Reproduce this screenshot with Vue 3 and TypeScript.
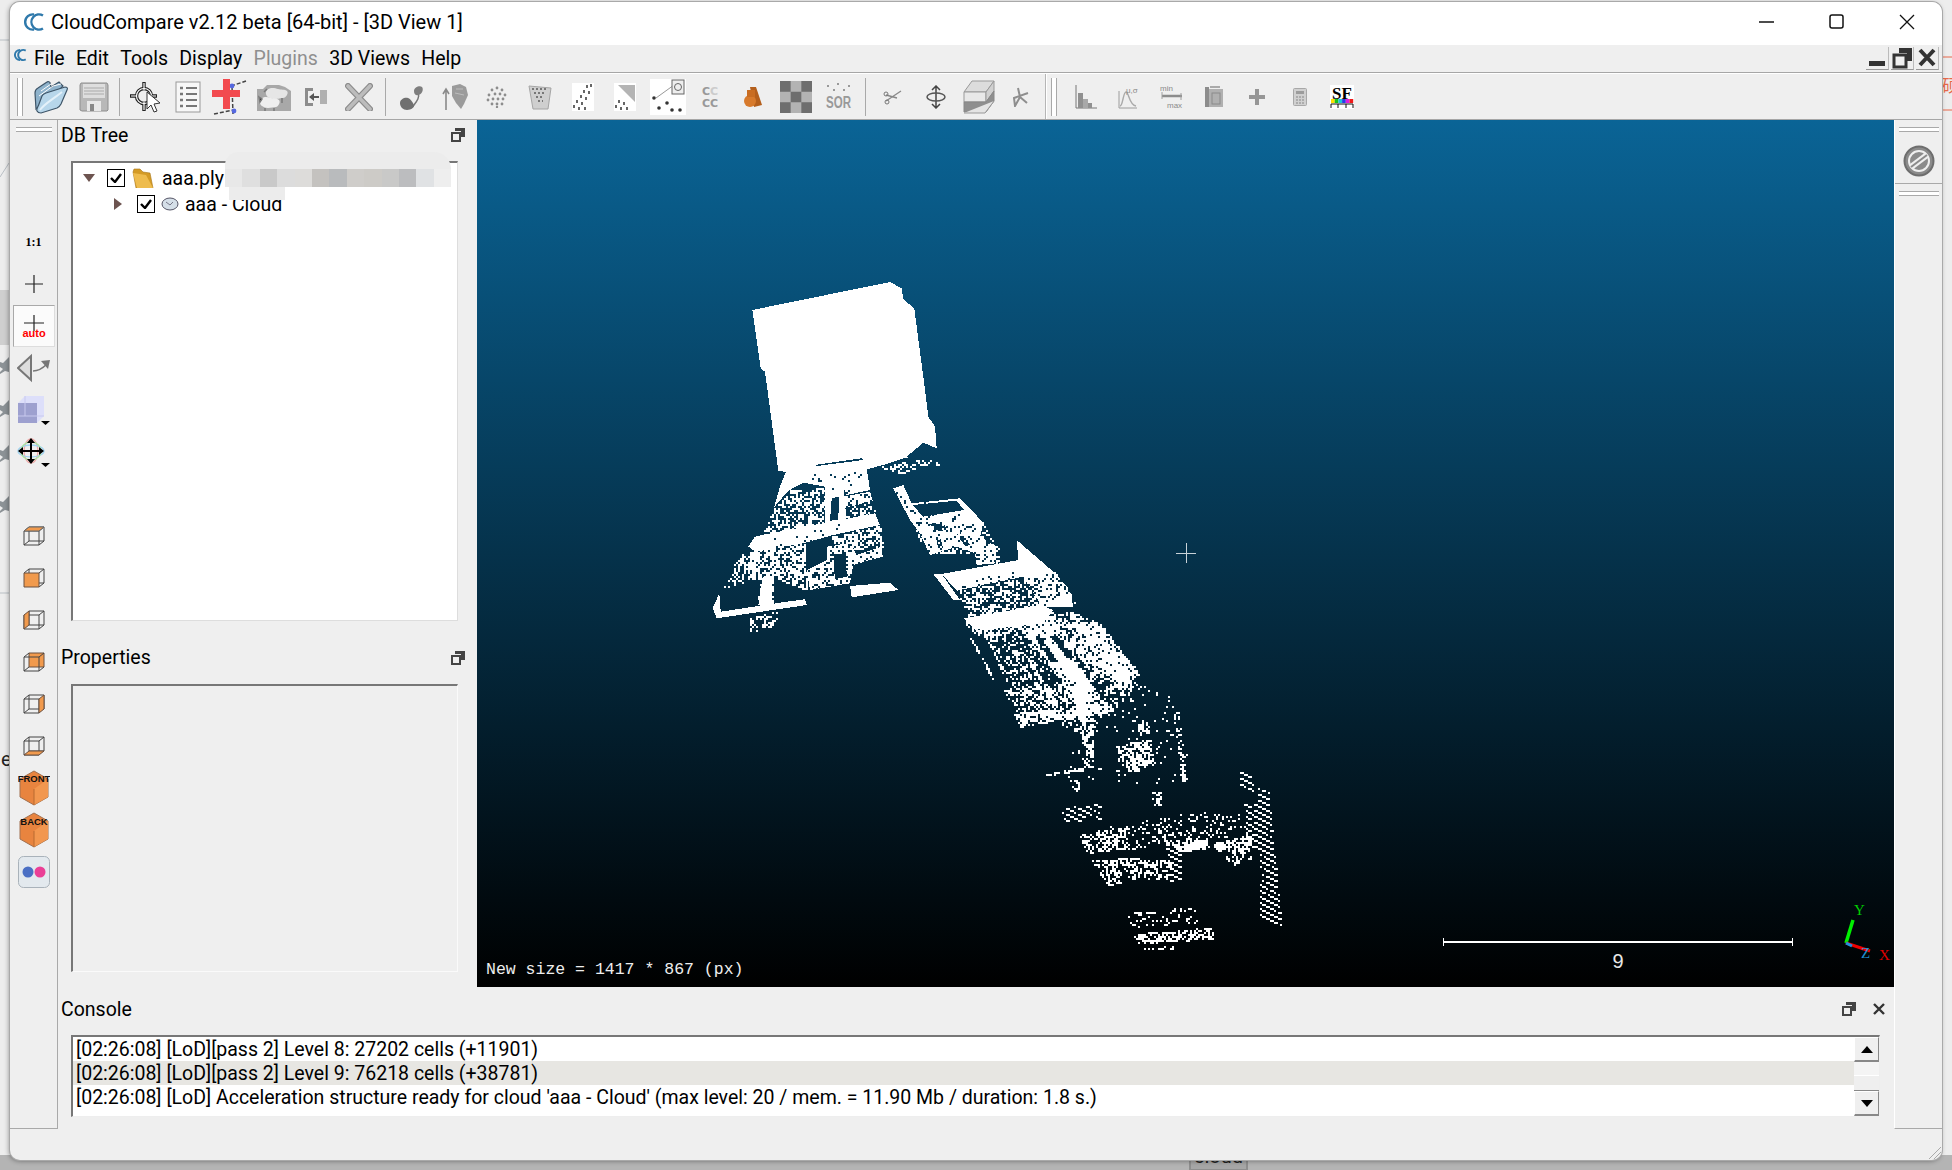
<script setup lang="ts">
// scene data is written in the coordinates of two crops of the view, then moved to page pixels
type Region = { p: number[]; d: number; stripe?: number }

const z8 = (p: number[]) => p.map((v, i) => (i % 2 ? 260 + v / 3 : 690 + v / 3))
const z9 = (p: number[]) => p.map((v, i) => (i % 2 ? 550 + v / 3 : 900 + v / 3))

const toPath = (p: number[]) => {
  let s = ''
  for (let i = 0; i < p.length; i += 2) s += (i ? 'L' : 'M') + p[i].toFixed(1) + ' ' + p[i + 1].toFixed(1)
  return s + 'Z'
}

const inside = (p: number[], x: number, y: number) => {
  let c = false
  for (let i = 0, j = p.length - 2; i < p.length; j = i, i += 2) {
    if (p[i + 1] > y !== p[j + 1] > y && x < ((p[j] - p[i]) * (y - p[i + 1])) / (p[j + 1] - p[i + 1]) + p[i]) c = !c
  }
  return c
}

let seed = 20714
const rnd = () => {
  seed = (seed + 0x6d2b79f5) | 0
  let t = Math.imul(seed ^ (seed >>> 15), 1 | seed)
  t = (t + Math.imul(t ^ (t >>> 7), 61 | t)) ^ t
  return ((t ^ (t >>> 14)) >>> 0) / 4294967296
}

const scatter = (list: Region[]) => {
  let s = ''
  for (const r of list) {
    const xs = r.p.filter((_, i) => i % 2 === 0)
    const ys = r.p.filter((_, i) => i % 2 === 1)
    const x0 = Math.floor(Math.min(...xs) / 2) * 2
    const y0 = Math.floor(Math.min(...ys) / 2) * 2
    for (let x = x0; x < Math.max(...xs); x += 2) {
      for (let y = y0; y < Math.max(...ys); y += 2) {
        if (!inside(r.p, x, y)) continue
        if (r.stripe) {
          const m = (y - x * 0.52) % r.stripe
          if ((m + r.stripe) % r.stripe >= 2) continue
        }
        if (rnd() < r.d) s += `M${x} ${y}h2v2h-2z`
      }
    }
  }
  return s
}

const solids = [
  z8([187,150,600,66,635,85,640,118,673,145,680,200,700,350,715,470,735,500,740,565,700,548,722,592,640,595,580,615,530,628,290,636,265,632,225,335,212,325]),
  z8([290,630,530,625,540,690,470,705,455,672,405,680,340,668,295,692,252,742,270,680]),
  z8([405,680,460,670,470,790,405,800]),
  z8([215,825,555,760,570,795,430,825,340,850,200,875,175,860,195,830]),
  z8([460,710,540,695,548,722,465,745]),
  z8([478,780,555,765,555,775,480,790]),
  z8([410,860,480,850,500,885,575,860,578,890,490,915,480,970,360,990,350,930,410,900]),
  z8([480,978,600,968,625,990,485,1012]),
  z8([92,1055,290,1025,345,1018,350,1035,80,1075,68,1045,88,1000]),
  z8([218,950,245,950,245,1030,205,1035]),
  z8([610,685,640,675,665,730,810,715,850,755,880,790,870,830,920,860,915,910,860,915,855,880,800,860,720,885,690,820,660,780]),
  z8([755,942,985,900,980,840,1090,935,1140,990,1150,1040,1050,1040,1000,950,800,992]),
  z8([830,1075,1050,1035,1090,1050,1060,1090,880,1110]),
  z8([730,942,755,942,810,1020,790,1020]),
  z9([190,205,420,170,430,200,225,240]),
]

const holes = [
  z8([375,615,515,595,520,600,380,618]),
  z8([425,715,447,710,445,780,420,782]),
  z8([432,885,468,880,470,950,434,958]),
  z8([930,985,1005,960,1050,1030,945,1050]),
  z8([668,735,800,722,822,750,700,770]),
  z8([720,790,760,785,770,810,730,815]),
  z8([738,830,750,830,760,868,745,870]),
  z8([795,815,810,815,840,855,825,858]),
  z8([250,960,345,945,345,990,245,1000]),
  z8([100,985,200,968,205,1032,95,1050]),
  z8([650,590,700,548,722,592,690,610]),
]

const points = scatter([
  { p: z8([250,745,300,690,405,680,400,795,215,825]), d: 0.5 },
  { p: z8([465,745,548,722,555,765,470,785]), d: 0.4 },
  { p: z8([560,620,720,590,760,640,740,600,640,640]), d: 0.4 },
  { p: z8([425,825,570,795,578,860,430,870]), d: 0.62 },
  { p: z8([175,860,345,850,350,990,245,950,180,960]), d: 0.66 },
  { p: z8([210,950,250,945,250,1030,200,1040]), d: 0.6 },
  { p: z8([150,880,210,870,180,960,90,985]), d: 0.5 },
  { p: z8([175,1070,270,1050,250,1100,180,1115]), d: 0.55 },
  { p: z8([670,770,880,780,920,870,860,880,720,880,680,830]), d: 0.4 },
  { p: z8([880,830,925,860,925,910,880,910]), d: 0.4 },
  { p: z8([800,990,1000,950,1050,1040,880,1070,830,1070]), d: 0.5 },
  { p: z8([1000,900,1090,930,1160,1030,1060,1000]), d: 0.4 },
  { p: z9([190,210,420,170,470,190,510,180,600,220,690,340,680,380,600,380,540,380,450,340,350,230,270,270,210,240]), d: 0.55 },
  { p: z9([350,230,450,200,700,350,700,420,560,560,480,520,330,430,260,270]), d: 0.28 },
  { p: z9([370,230,440,220,600,440,530,470]), d: 0.78 },
  { p: z9([500,200,610,230,720,370,650,420]), d: 0.6 },
  { p: z9([590,250,700,345,680,415,600,360]), d: 0.55 },
  { p: z9([590,360,720,400,800,440,720,430,600,400]), d: 0.25 },
  { p: z9([340,320,348,316,428,420,418,425]), d: 0.7 },
  { p: z9([380,330,388,326,448,420,438,425]), d: 0.7 },
  { p: z9([205,260,212,258,280,382,274,386]), d: 0.85 },
  { p: z9([340,490,620,450,630,485,360,530]), d: 0.72 },
  { p: z9([310,420,470,400,540,450,350,490]), d: 0.42 },
  { p: z9([528,380,572,380,582,650,552,650]), d: 0.62 },
  { p: z9([500,450,800,410,890,700,500,700]), d: 0.04 },
  { p: z9([640,585,750,565,762,640,690,672]), d: 0.62 },
  { p: z9([815,455,830,455,862,700,842,700]), d: 0.38 },
  { p: z9([432,670,550,648,552,660,435,676]), d: 0.7 },
  { p: z9([530,845,910,780,1020,790,1040,850,670,900]), d: 0.2 },
  { p: z9([800,880,920,865,925,893,840,905]), d: 0.88 },
  { p: z9([930,880,1060,850,1050,882,950,898]), d: 0.72 },
  { p: z9([1012,655,1055,680,1060,735,1018,715]), d: 0.92, stripe: 6 },
  { p: z9([1070,700,1105,715,1145,1130,1080,1095]), d: 0.92, stripe: 6 },
  { p: z9([1030,750,1070,760,1085,920,1040,880]), d: 0.92, stripe: 6 },
  { p: z9([795,885,840,885,845,1000,810,990]), d: 0.92, stripe: 6 },
  { p: z9([535,850,680,830,680,895,560,910]), d: 0.42 },
  { p: z9([570,925,650,925,675,995,620,1005]), d: 0.5 },
  { p: z9([650,920,820,930,800,985,690,990]), d: 0.45 },
  { p: z9([665,1090,890,1065,890,1120,700,1130]), d: 0.16 },
  { p: z9([695,1150,930,1130,945,1165,710,1180]), d: 0.55 },
  { p: z9([730,1190,830,1180,830,1200,735,1200]), d: 0.3 },
  { p: z9([480,770,600,760,605,805,495,815]), d: 0.8, stripe: 6 },
  { p: z9([750,725,785,725,785,770,760,770]), d: 0.5 },
  { p: z9([940,890,1060,880,1060,920,1000,945]), d: 0.42 },
  { p: z9([500,685,540,690,540,735,505,705]), d: 0.45 },
  { p: z9([710,505,745,510,745,550,712,545]), d: 0.5 },
])

const specks = scatter([
  { p: z8([410,860,480,850,500,885,575,860,578,890,490,915,480,970,360,990,350,930,410,900]), d: 0.22 },
  { p: z8([215,825,555,760,570,795,430,825,340,850,200,875]), d: 0.04 },
  { p: z8([460,710,540,695,548,722,465,745]), d: 0.22 },
  { p: z8([610,685,880,790,920,910,720,885]), d: 0.12 },
  { p: z8([300,640,530,630,470,700,340,668]), d: 0.06 },
  { p: z8([800,992,1000,950,1000,925,800,965]), d: 0.1 },
  { p: z8([1000,950,1090,935,1140,990,1050,1040]), d: 0.25 },
  { p: z9([420,260,470,330,450,335,405,265]), d: 0.9 },
  { p: z9([465,250,520,320,505,330,450,258]), d: 0.9 },
  { p: z9([520,300,570,370,558,376,506,306]), d: 0.8 },
])

const solidPath = solids.map(toPath).join('')
const holePath = holes.map(toPath).join('')

const mosaic = ['#e8e8e8', '#dfdfdf', '#c9c9c9', '#dcdcdc', '#dddcda', '#c4c2bf', '#b9bbbd', '#cfcdca', '#cdcbc7', '#c9c9c8', '#bcbdbf', '#e0e2e4', '#eeeeee']
const consoleRows = [
  "[02:26:08] [LoD][pass 2] Level 8: 27202 cells (+11901)",
  "[02:26:08] [LoD][pass 2] Level 9: 76218 cells (+38781)",
  "[02:26:08] [LoD] Acceleration structure ready for cloud 'aaa - Cloud' (max level: 20 / mem. = 11.90 Mb / duration: 1.8 s.)",
]
</script>

<template>
  <div class="page">
    <svg class="behind" width="1952" height="1170">
      <rect x="0" y="1155" width="1952" height="15" fill="#b4b4b4" />
      <rect x="1190" y="1155" width="57" height="15" fill="#a6a6a6" stroke="#8e8e8e" stroke-width="2" />
      <text x="1194" y="1163" class="stray-dark">cloud</text>
      <rect x="0" y="290" width="10" height="55" fill="#cfcfcf" />
      <g fill="#8c9296">
        <path d="M9 357l-6 6-3-1v5l3 2-3 3v2l5-3 4 1z" />
        <path d="M9 400l-6 6-3-1v5l3 2-3 3v2l5-3 4 1z" />
        <path d="M9 445l-6 6-3-1v5l3 2-3 3v2l5-3 4 1z" />
        <path d="M9 496l-6 6-3-1v5l3 2-3 3v2l5-3 4 1z" />
      </g>
      <path d="M0 40h10M0 177l9-14M0 593h10" stroke="#b9bfc4" fill="none" />
      <path d="M1942 57h10M1942 110h10" stroke="#e8694a" />
      <text x="1942" y="92" class="stray">硕</text>
      <text x="1" y="766" class="stray-dark">e</text>
    </svg>

    <div class="window">
      <header class="titlebar">
        <svg class="cc-logo" width="22" height="22" viewBox="0 0 22 22">
          <g fill="none" stroke="#2f79ab" stroke-width="2.4">
            <path d="M11 3.5a7.6 7.6 0 1 0 0 15" />
            <path d="M20 4.5a7.6 7.6 0 1 0 0 13" />
          </g>
        </svg>
        <span class="title">CloudCompare v2.12 beta [64-bit] - [3D View 1]</span>
        <div class="caption">
          <svg width="16" height="16"><path d="M0 8h15" stroke="#111" stroke-width="1.4" /></svg>
          <svg width="16" height="16"><rect x="1" y="1" width="13" height="13" rx="2" fill="none" stroke="#111" stroke-width="1.5" /></svg>
          <svg width="16" height="16"><path d="M1 1l14 14M15 1L1 15" stroke="#111" stroke-width="1.3" /></svg>
        </div>
      </header>

      <nav class="menubar">
        <svg class="cc-small" width="14" height="14" viewBox="0 0 22 22">
          <g fill="none" stroke="#2f79ab" stroke-width="3">
            <path d="M11 3a8 8 0 1 0 0 16" />
            <path d="M20 4a8 8 0 1 0 0 14" />
          </g>
        </svg>
        <span>File</span><span>Edit</span><span>Tools</span><span>Display</span>
        <span class="off">Plugins</span><span>3D Views</span><span>Help</span>
        <div class="mdi">
          <button><svg width="20" height="20"><rect x="2" y="13" width="16" height="5" fill="#333" /></svg></button>
          <button>
            <svg width="22" height="22"><path d="M8 1h13v13h-5V6H8z" fill="#333" /><rect x="3" y="8" width="12" height="12" fill="none" stroke="#333" stroke-width="3" /></svg>
          </button>
          <button><svg width="20" height="20"><path d="M3 2l14 15M17 2L3 17" stroke="#333" stroke-width="4" /></svg></button>
        </div>
      </nav>

      <div class="toolbar">
        <i class="handle"></i>
        <b class="tool">
          <svg width="34" height="34" viewBox="0 0 34 34">
            <path d="M2 29L1 13c0-2 1-4 3-5l9-6c1-1 3 0 3 1l1 4 8-5 4 4-2 2z" fill="#8fb3cc" stroke="#3e5568" stroke-width="1.2" />
            <path d="M5 16L19 6l8-2M7 11l10-7" stroke="#fff" fill="none" />
            <path d="M3 31c-1-2 1-4 2-7l3-8c1-2 2-2 4-3l19-6c2 0 3 1 2 3l-6 14c-1 2-2 3-4 4L7 33c-2 0-3 0-4-2z" fill="#b7d6ea" stroke="#3e5568" stroke-width="1.2" />
            <path d="M6 30c4-6 12-10 22-18" stroke="#e4f1f9" stroke-width="2" fill="none" />
          </svg>
        </b>
        <b class="tool">
          <svg width="30" height="30" viewBox="0 0 30 30">
            <path d="M2 1h26l1 2v25l-1 1H3l-2-1V3z" fill="#b8b8b8" stroke="#8e8e8e" />
            <rect x="4" y="2" width="22" height="14" fill="#dedede" />
            <path d="M5 6h20M5 9h20M5 12h20" stroke="#aaa" />
            <rect x="8" y="19" width="14" height="10" fill="#e8e8e8" />
            <rect x="11" y="22" width="4" height="7" fill="#888" />
          </svg>
        </b>
        <i class="sep sep-a"></i>
        <b class="tool">
          <svg width="34" height="34" viewBox="0 0 34 34">
            <g fill="none">
              <g stroke="#222" stroke-width="3.400">
                <circle cx="15" cy="16" r="7.500" />
                <path d="M15 2v8M15 22v9M1 16h7M22 16h6" />
              </g>
              <g stroke="#fff" stroke-width="1.200">
                <circle cx="15" cy="16" r="7.500" />
                <path d="M15 3v7M15 22v8M2 16h6M22 16h5" />
              </g>
            </g>
            <path d="M18 12l0 17 4-4 3 7 3-1-3-7 6-1z" fill="#fff" stroke="#333" />
          </svg>
        </b>
        <b class="tool">
          <svg width="26" height="32" viewBox="0 0 26 32">
            <rect x="1" y="1" width="24" height="30" fill="#f7f7f7" stroke="#999" />
            <path d="M5 7h3M5 13h3M5 19h3M5 25h3" stroke="#777" stroke-width="2.400" />
            <path d="M11 7h11M11 13h11M11 19h11M11 25h11" stroke="#777" stroke-width="2" />
          </svg>
        </b>
        <b class="tool">
          <svg width="38" height="36" viewBox="0 0 38 36">
            <path d="M19 7L34 2M20 7l1 28M2 35L21 31" fill="none" stroke="#444" stroke-width="1.500" stroke-dasharray="4 2" />
            <circle cx="20" cy="7" r="2.400" fill="#5568e0" />
            <circle cx="22" cy="32" r="2.400" fill="#5568e0" />
            <path d="M11 0h7v11h10v7H18v12h-7V18H0v-7h11z" fill="#f24a4f" />
          </svg>
        </b>
        <b class="tool">
          <svg width="34" height="28" viewBox="0 0 34 28">
            <path d="M0 6h6l4-4 12 0 6 2 6 4v20H0z" fill="#a8a8a8" />
            <path d="M10 7c3-3 8-2 11-1s7 0 9 2-1 7-4 7-4 1-8 1-5-1-7-2-3-5-1-7z" fill="#e6e6e6" />
            <path d="M4 16c3-3 7-2 10-1s6 0 8 2-1 7-3 7-5 1-8 1-4-1-6-2-3-5-1-7z" fill="#eeeeee" />
            <path d="M2 14l3 2-2 3zM8 25v3M17 25v3M25 15v5M10 6L7 9" stroke="#7a7a7a" stroke-width="1.500" />
          </svg>
        </b>
        <b class="tool">
          <svg width="24" height="24" viewBox="0 0 24 24">
            <path d="M1 3h8v3H4v12h5v3H1z" fill="#8c8c8c" />
            <path d="M16 5h7v14h-7z" fill="#b0b0b0" />
            <path d="M6 12h9" stroke="#555" stroke-width="2.200" />
            <path d="M5 12l5-4v8z" fill="#555" />
          </svg>
        </b>
        <b class="tool">
          <svg width="28" height="28" viewBox="0 0 28 28">
            <path d="M3 3l22 23M25 3L3 26" stroke="#8c8c8c" stroke-width="6" stroke-linecap="round" />
            <path d="M3 3l22 23M25 3L3 26" stroke="#bcbcbc" stroke-width="3.600" stroke-linecap="round" />
          </svg>
        </b>
        <i class="sep sep-b"></i>
        <b class="tool">
          <svg width="26" height="28" viewBox="0 0 26 28">
            <path d="M19 10c2 4-1 8-4 12l-3 3" fill="none" stroke="#777" stroke-width="1.500" />
            <path d="M15 8c0-4 6-6 8-4s0 8-4 8c-3 1-4-2-4-4z" fill="#7e7e7e" />
            <path d="M1 20c0-4 5-6 8-5s5 5 6 7-3 5-7 5-7-3-7-7z" fill="#707070" />
          </svg>
        </b>
        <b class="tool">
          <svg width="26" height="28" viewBox="0 0 26 28">
            <path d="M4 27V7M1 11l3-5 3 5" stroke="#8a8a8a" fill="none" stroke-width="1.600" />
            <path d="M10 3l8-2 6 3 2 8-4 9-3 5-5-6-4-7z" fill="#9b9b9b" />
            <path d="M14 6l7 0M13 10l9 2" stroke="#bdbdbd" />
          </svg>
        </b>
        <b class="tool"><svg width="22" height="22" viewBox="0 0 22 22" fill="#8d8d8d"><circle cx="11" cy="2" r="1.400" /><circle cx="6" cy="4" r="1.400" /><circle cx="16" cy="4" r="1.400" /><circle cx="3" cy="9" r="1.400" /><circle cx="9" cy="8" r="1.400" /><circle cx="14" cy="8" r="1.400" /><circle cx="19" cy="9" r="1.400" /><circle cx="2" cy="14" r="1.400" /><circle cx="7" cy="13" r="1.400" /><circle cx="12" cy="13" r="1.400" /><circle cx="17" cy="13" r="1.400" /><circle cx="6" cy="18" r="1.400" /><circle cx="11" cy="18" r="1.400" /><circle cx="16" cy="18" r="1.400" /><circle cx="11" cy="21" r="1.200" /></svg></b>
        <b class="tool">
          <svg width="26" height="26" viewBox="0 0 26 26">
            <path d="M2 2l22 2-3 21-15 0z" fill="#cfcfcf" stroke="#a5a5a5" />
            <path d="M5 5h16M7 9h12M9 13h8M11 17h5" stroke="#777" stroke-width="2" stroke-dasharray="2 2" />
          </svg>
        </b>
        <b class="tool">
          <svg width="22" height="28" viewBox="0 0 22 28">
            <rect width="22" height="28" fill="#fff" />
            <g fill="#666"><rect x="14" y="2" width="2" height="3" /><rect x="18" y="1" width="2" height="3" /><rect x="11" y="7" width="2" height="3" /><rect x="16" y="8" width="2" height="3" /><rect x="8" y="12" width="2" height="3" /><rect x="13" y="14" width="2" height="3" /><rect x="4" y="17" width="2" height="3" /><rect x="9" y="19" width="2" height="3" /><rect x="1" y="22" width="2" height="3" /><rect x="6" y="24" width="2" height="3" /><rect x="12" y="24" width="2" height="3" /></g>
          </svg>
        </b>
        <b class="tool">
          <svg width="22" height="28" viewBox="0 0 22 28">
            <rect width="22" height="28" fill="#fff" />
            <path d="M4 2h17v17z" fill="#b4b4b4" />
            <g fill="#666"><rect x="1" y="22" width="2" height="3" /><rect x="6" y="24" width="2" height="3" /><rect x="12" y="24" width="2" height="3" /><rect x="4" y="17" width="2" height="3" /><rect x="9" y="19" width="2" height="3" /></g>
          </svg>
        </b>
        <b class="tool">
          <svg width="36" height="36" viewBox="0 0 36 36">
            <rect width="36" height="36" fill="#fff" />
            <path d="M6 19L24 6" stroke="#999" />
            <rect x="22" y="1" width="12" height="14" fill="#eee" stroke="#666" />
            <circle cx="28" cy="8" r="3.500" fill="none" stroke="#666" />
            <g fill="#333"><circle cx="4" cy="19" r="1.800" /><circle cx="9" cy="29" r="1.800" /><circle cx="17" cy="24" r="1.800" /><circle cx="22" cy="31" r="1.800" /><circle cx="30" cy="31" r="1.800" /></g>
          </svg>
        </b>
        <b class="tool"><svg width="20" height="26" viewBox="0 0 20 26"><text x="1" y="11" class="cc-txt" fill="#999">C<tspan fill="#ccc">C</tspan></text><text x="1" y="23" class="cc-txt" fill="#999">CC</text></svg></b>
        <b class="tool">
          <svg width="18" height="24" viewBox="0 0 18 24">
            <path d="M6 2h6l6 18-8 2z" fill="#b45f1c" />
            <circle cx="6" cy="16" r="6" fill="#d77a2c" />
            <rect x="3" y="5" width="8" height="7" fill="#c96d22" />
          </svg>
        </b>
        <b class="tool">
          <svg width="32" height="32" viewBox="0 0 3 3">
            <rect width="3" height="3" fill="#b3b3b3" />
            <path d="M0 0h1v1H0zM2 0h1v1H2zM1 1h1v1H1zM0 2h1v1H0zM2 2h1v1H2z" fill="#6e6e6e" />
          </svg>
        </b>
        <b class="tool">
          <svg width="26" height="34" viewBox="0 0 26 34">
            <g fill="#999"><rect x="1" y="5" width="2" height="2" /><rect x="7" y="9" width="2" height="2" /><rect x="11" y="3" width="2" height="2" /><rect x="17" y="9" width="2" height="2" /><rect x="22" y="5" width="2" height="2" /></g>
            <text x="0" y="28" class="sor" textLength="25" lengthAdjust="spacingAndGlyphs">SOR</text>
          </svg>
        </b>
        <i class="sep sep-c"></i>
        <b class="tool">
          <svg width="20" height="16" viewBox="0 0 20 16">
            <path d="M3 12L18 2M3 6l11 3" stroke="#888" fill="none" stroke-width="1.300" />
            <circle cx="3" cy="5" r="2" fill="none" stroke="#777" />
            <circle cx="4" cy="13" r="2" fill="none" stroke="#777" />
          </svg>
        </b>
        <b class="tool">
          <svg width="20" height="24" viewBox="0 0 20 24">
            <path d="M10 1v22M6 5l4-4 4 4M6 19l4 4 4-4" stroke="#444" fill="none" stroke-width="1.500" />
            <ellipse cx="10" cy="12" rx="9" ry="4" fill="none" stroke="#555" stroke-width="1.500" />
          </svg>
        </b>
        <b class="tool">
          <svg width="32" height="34" viewBox="0 0 32 34">
            <path d="M9 1h22l-8 11H1z" fill="#dcdcdc" stroke="#999" />
            <path d="M1 12h22v10H1z" fill="#e8e8e8" stroke="#999" />
            <path d="M23 12l8-11v10l-8 11z" fill="#d0d0d0" stroke="#999" />
            <path d="M1 22h22l8-11v10l-8 11H1z" fill="#8f8f8f" stroke="#888" />
            <path d="M1 33h21l9-12" fill="#e4e4e4" stroke="#999" />
          </svg>
        </b>
        <b class="tool">
          <svg width="16" height="20" viewBox="0 0 16 20">
            <path d="M5 1l2 9 7 6M15 6L1 11l1 8 5-9" fill="none" stroke="#8e8e8e" stroke-width="2" />
          </svg>
        </b>
        <i class="break"></i>
        <i class="handle handle-2"></i>
        <b class="tool">
          <svg width="22" height="24" viewBox="0 0 22 24">
            <path d="M1 0v23h21" fill="none" stroke="#777" />
            <rect x="3" y="8" width="5" height="15" fill="#909090" />
            <rect x="8" y="14" width="5" height="9" fill="#a8a8a8" />
            <rect x="13" y="18" width="4" height="5" fill="#909090" />
          </svg>
        </b>
        <b class="tool">
          <svg width="22" height="24" viewBox="0 0 22 24">
            <path d="M1 6v17h18" fill="none" stroke="#9c9c9c" />
            <path d="M2 21c3 0 3-14 6-14s3 13 10 14" fill="none" stroke="#aaa" stroke-width="1.400" />
            <text x="8" y="8" class="tiny">μ,σ</text>
          </svg>
        </b>
        <b class="tool">
          <svg width="24" height="28" viewBox="0 0 24 28">
            <text x="0" y="8" class="tiny">min</text>
            <text x="7" y="25" class="tiny">max</text>
            <path d="M2 13h20" stroke="#8c8c8c" stroke-width="2.400" />
            <path d="M2 9v7M21 10v7" stroke="#a0a0a0" />
          </svg>
        </b>
        <b class="tool">
          <svg width="20" height="22" viewBox="0 0 20 22">
            <rect x="1" y="1" width="4" height="20" fill="#8c8c8c" />
            <rect x="5" y="3" width="14" height="18" fill="#b0b0b0" />
            <rect x="8" y="7" width="8" height="11" fill="none" stroke="#8a8a8a" />
            <path d="M6 1h10" stroke="#aaa" stroke-width="2" />
          </svg>
        </b>
        <b class="tool"><svg width="16" height="16" viewBox="0 0 16 16"><path d="M6 0h4v6h6v4h-6v6H6v-6H0V6h6z" fill="#969696" /></svg></b>
        <b class="tool">
          <svg width="14" height="18" viewBox="0 0 14 18">
            <rect x="0.500" y="0.500" width="13" height="17" rx="1" fill="#d0d0d0" stroke="#a8a8a8" />
            <rect x="3" y="3" width="8" height="3" fill="#9c9c9c" />
            <path d="M3 9h2M6 9h2M9 9h2M3 12h2M6 12h2M9 12h2M3 15h2M6 15h2M9 15h2" stroke="#888" />
          </svg>
        </b>
        <b class="tool">
          <svg width="24" height="24" viewBox="0 0 24 24">
            <rect width="24" height="24" fill="#fff" />
            <text x="12" y="14" class="sf">SF</text>
            <rect x="1" y="14" width="3.700" height="4" fill="#ffe000" />
            <rect x="4.700" y="14" width="3.700" height="4" fill="#19c219" />
            <rect x="8.400" y="14" width="3.700" height="4" fill="#1bc6d8" />
            <rect x="12.100" y="14" width="3.700" height="4" fill="#2a3ce8" />
            <rect x="15.800" y="14" width="3.700" height="4" fill="#e01ee0" />
            <rect x="19.500" y="14" width="3.700" height="4" fill="#ee1b1b" />
            <path d="M1 23v-4h22v4M8 19v4M16 19v4" fill="none" stroke="#111" />
          </svg>
        </b>
      </div>

      <div class="body">
        <aside class="side">
          <i class="grip"></i>
          <div class="side-item one">1:1</div>
          <div class="side-item"><svg width="20" height="20"><path d="M10 1v18M1 10h18" stroke="#222" stroke-width="1.200" /></svg></div>
          <div class="side-item auto">
            <svg width="24" height="28" viewBox="0 0 24 28"><path d="M12 3v16M2 11h20" stroke="#222" stroke-width="1.200" /><text x="12" y="25" class="auto-txt">auto</text></svg>
          </div>
          <div class="side-item">
            <svg width="34" height="30" viewBox="0 0 34 30">
              <path d="M1 15L14 3v24z" fill="#ddd" stroke="#777" stroke-width="2" />
              <path d="M16 18c6 0 10-3 14-7" fill="none" stroke="#777" stroke-width="1.500" />
              <path d="M24 8l9-1-2 9z" fill="#777" />
            </svg>
          </div>
          <div class="side-item">
            <svg width="34" height="30" viewBox="0 0 34 30">
              <path d="M1 8l7-7h19v20l-7 7H1z" fill="#dddffa" />
              <path d="M1 8h19v20H1z" fill="#9da0cf" />
              <path d="M8 1v20H1M8 21l19 0" stroke="#c8c9ee" fill="none" />
              <path d="M24 26h9l-4.500 4z" fill="#000" />
            </svg>
          </div>
          <div class="side-item">
            <svg width="34" height="30" viewBox="0 0 34 30">
              <g fill="none" stroke-width="1.300">
                <ellipse cx="14" cy="14" rx="7" ry="12" stroke="#efaaa8" />
                <ellipse cx="14" cy="14" rx="13" ry="6" stroke="#9fd3f0" />
                <ellipse cx="14" cy="14" rx="10" ry="9" stroke="#a5e6a2" />
              </g>
              <path d="M14 2v24M2 14h24" stroke="#000" stroke-width="2" />
              <path d="M10 6l4-5 4 5zM10 22l4 5 4-5zM6 10l-5 4 5 4zM22 10l5 4-5 4z" fill="#000" />
              <path d="M24 26h9l-4.500 4z" fill="#000" />
            </svg>
          </div>
          <div class="side-item"></div>
          <div class="side-item">
            <svg width="22" height="20" viewBox="0 0 22 20"><g class="cube"><path d="M1 5h15v14H1zM6 1h15v14H6zM1 5l5-4M16 5l5-4M1 19l5-4M16 19l5-4" /></g><path d="M1 5l5-4h15l-5 4z" fill="#f19a4d" stroke="#6b6b6b" /></svg>
          </div>
          <div class="side-item">
            <svg width="22" height="20" viewBox="0 0 22 20"><g class="cube"><path d="M6 1h15v14H6zM1 5l5-4M16 5l5-4M16 19l5-4" /></g><path d="M1 5h15v14H1z" fill="#f19a4d" stroke="#6b5040" /></svg>
          </div>
          <div class="side-item">
            <svg width="22" height="20" viewBox="0 0 22 20"><g class="cube"><path d="M1 5h15v14H1zM6 1h15v14H6zM16 5l5-4M16 19l5-4" /></g><path d="M1 5l5-4v14l-5 4z" fill="#f19a4d" stroke="#6b5040" /></svg>
          </div>
          <div class="side-item">
            <svg width="22" height="20" viewBox="0 0 22 20"><path d="M6 1h15v14H6z" fill="#f19a4d" stroke="#6b5040" /><g class="cube"><path d="M1 5h15v14H1zM1 5l5-4M16 5l5-4M1 19l5-4M16 19l5-4" /></g></svg>
          </div>
          <div class="side-item">
            <svg width="22" height="20" viewBox="0 0 22 20"><g class="cube"><path d="M1 5h15v14H1zM6 1h15v14H6zM1 5l5-4M1 19l5-4" /></g><path d="M16 5l5-4v14l-5 4z" fill="#f19a4d" stroke="#6b5040" /></svg>
          </div>
          <div class="side-item">
            <svg width="22" height="20" viewBox="0 0 22 20"><g class="cube"><path d="M1 5h15v14H1zM6 1h15v14H6zM1 5l5-4M16 5l5-4" /></g><path d="M1 19l5-4h15l-5 4z" fill="#f19a4d" stroke="#6b5040" /></svg>
          </div>
          <div class="side-item">
            <svg width="32" height="36" viewBox="0 0 32 36">
              <path d="M16 1l14 8v18l-14 8-14-8V9z" fill="#e8843f" stroke="#a07050" />
              <path d="M16 19l14-10v18l-14 8z" fill="#f2974f" />
              <path d="M16 19v16" stroke="#b86a30" />
              <text x="16" y="12" class="cube-txt">FRONT</text>
            </svg>
          </div>
          <div class="side-item">
            <svg width="32" height="36" viewBox="0 0 32 36">
              <path d="M16 1l14 8v18l-14 8-14-8V9z" fill="#e8843f" stroke="#a07050" />
              <path d="M16 19l14-10v18l-14 8z" fill="#f2974f" />
              <path d="M16 19v16" stroke="#b86a30" />
              <text x="16" y="13" class="cube-txt">BACK</text>
            </svg>
          </div>
          <div class="side-item">
            <svg width="32" height="32" viewBox="0 0 32 32">
              <rect x="0.500" y="0.500" width="31" height="31" rx="5" fill="#e3e9ee" stroke="#a9b2ba" />
              <circle cx="10" cy="16" r="5.500" fill="#4a6fc4" />
              <circle cx="22" cy="16" r="5.500" fill="#ea3f96" />
            </svg>
          </div>
        </aside>

        <main class="center">
          <div class="upper">
            <div class="docks">
              <div class="dock-head tree-head">
                <span>DB Tree</span>
                <svg class="float" width="14" height="14"><path d="M4 0h10v9h-4V3H4z" fill="#444" /><rect x="1" y="5" width="8" height="8" fill="none" stroke="#444" stroke-width="2" /></svg>
              </div>
              <div class="tree">
                <div class="tree-row">
                  <i class="arrow-down"></i>
                  <i class="check"><svg width="12" height="10"><path d="M1 5l4 4 6-8" fill="none" stroke="#000" stroke-width="2.400" /></svg></i>
                  <svg class="folder" width="22" height="20" viewBox="0 0 22 20">
                    <path d="M1 4l1-3h6l3 3 7 1 3 15H4z" fill="#d49b26" stroke="#a8761a" stroke-width="0.600" />
                    <path d="M1 5l13 2 7 13H5z" fill="#eebc4e" />
                  </svg>
                  <span>aaa.ply</span>
                </div>
                <div class="tree-row nested">
                  <i class="arrow-right"></i>
                  <i class="check"><svg width="12" height="10"><path d="M1 5l4 4 6-8" fill="none" stroke="#000" stroke-width="2.400" /></svg></i>
                  <svg class="cloud" width="18" height="14" viewBox="0 0 18 14">
                    <ellipse cx="9" cy="7" rx="8" ry="6" fill="#d5dfe8" stroke="#556" />
                    <path d="M5 5l4 3 3-3" stroke="#778" fill="none" />
                  </svg>
                  <span>aaa - Cloud</span>
                </div>
                <div class="smudge">
                  <div class="smudge-top"></div>
                  <div class="smudge-cells">
                    <i v-for="(c, i) in mosaic" :key="i" :style="{ background: c }"></i>
                  </div>
                  <div class="smudge-tail"></div>
                </div>
              </div>
              <div class="dock-head props-head">
                <span>Properties</span>
                <svg class="float" width="14" height="14"><path d="M4 0h10v9h-4V3H4z" fill="#444" /><rect x="1" y="5" width="8" height="8" fill="none" stroke="#444" stroke-width="2" /></svg>
              </div>
              <div class="props"></div>
            </div>

            <section class="view">
              <svg width="1417" height="867" viewBox="477 120 1417 867">
                <defs>
                  <linearGradient id="sky" gradientUnits="userSpaceOnUse" x1="0" y1="120" x2="0" y2="987">
                    <stop offset="0" stop-color="#0a6496" />
                    <stop offset="1" stop-color="#000" />
                  </linearGradient>
                </defs>
                <g shape-rendering="crispEdges">
                  <path :d="solidPath" fill="#fff" />
                  <path :d="holePath" fill="url(#sky)" />
                  <path :d="points" fill="#fff" />
                  <path :d="specks" fill="url(#sky)" />
                </g>
                <path d="M1186 543v20M1176 553h20" stroke="#c8d2d8" shape-rendering="crispEdges" />
                <path d="M1443.500 938v8M1792.500 938v8" stroke="#fff" stroke-width="1" shape-rendering="crispEdges" />
                <path d="M1443 942h350" stroke="#fff" stroke-width="2" shape-rendering="crispEdges" />
                <text x="1618" y="968" class="scale-num">9</text>
                <text x="486" y="974" class="size-msg">New size = 1417 * 867 (px)</text>
                <path d="M1846 943l7-23" stroke="#00f000" stroke-width="3.500" />
                <path d="M1846 943l24 8" stroke="#f00000" stroke-width="3" />
                <path d="M1846 943l6 3" stroke="#1e90e0" stroke-width="3" />
                <text x="1854" y="915" class="axis" fill="#00d000">Y</text>
                <text x="1861" y="958" class="axis" fill="#1e8fd0">Z</text>
                <text x="1879" y="960" class="axis" fill="#e00000">X</text>
              </svg>
            </section>
          </div>

          <div class="console">
            <div class="console-head">
              <span>Console</span>
              <svg width="14" height="14"><path d="M4 0h10v9h-4V3H4z" fill="#444" /><rect x="1" y="5" width="8" height="8" fill="none" stroke="#444" stroke-width="2" /></svg>
              <svg width="12" height="12"><path d="M1 1l10 10M11 1L1 11" stroke="#333" stroke-width="2.400" /></svg>
            </div>
            <div class="log">
              <div class="log-rows">
                <div v-for="(row, i) in consoleRows" :key="i" class="log-row" :class="{ alt: i === 1 }">{{ row }}</div>
              </div>
              <div class="scroll">
                <button class="sb-btn"><i class="up"></i></button>
                <div class="sb-track"></div>
                <div class="sb-thumb"></div>
                <button class="sb-btn"><i class="down"></i></button>
              </div>
            </div>
          </div>
        </main>

        <aside class="side-right">
          <i class="grip"></i>
          <svg width="32" height="32" viewBox="0 0 32 32">
            <circle cx="16" cy="16" r="14.500" fill="#8b8b8b" stroke="#6e6e6e" stroke-width="2" />
            <circle cx="16" cy="16" r="10" fill="none" stroke="#efefef" stroke-width="2" />
            <path d="M8 22L24 10" stroke="#efefef" stroke-width="6" />
            <path d="M8 22L24 10" stroke="#8b8b8b" stroke-width="2" />
          </svg>
          <hr />
          <i class="grip"></i>
        </aside>
      </div>

      <footer class="status">
        <svg width="14" height="14"><path d="M13 1L1 13M13 6L6 13M13 10l-3 3" stroke="#aaa" /></svg>
      </footer>
    </div>
  </div>
</template>

<style scoped>
.page {
  position: relative;
  width: 1952px;
  height: 1170px;
  overflow: hidden;
  background: #ededed;
  font-family: Roboto, "Liberation Sans", sans-serif;
  font-size: 19.5px;
  color: #000;
}
.behind {
  position: absolute;
  left: 0;
  top: 0;
}
.stray {
  font: 17px "Noto Sans CJK SC", sans-serif;
  fill: #e8694a;
}
.stray-dark {
  font: 20px Roboto, sans-serif;
  fill: #222;
}
.window {
  position: relative;
  box-sizing: border-box;
  display: flex;
  flex-direction: column;
  width: 1932px;
  height: 1158px;
  margin: 2px 0 0 10px;
  background: #efefef;
  border-radius: 10px;
  box-shadow: 0 0 0 1px #a9a9a9, -1px 1px 5px rgba(0, 0, 0, 0.4);
  overflow: hidden;
}
.titlebar {
  display: flex;
  align-items: center;
  flex: 0 0 43px;
  box-sizing: border-box;
  padding: 0 0 3px 13px;
  background: #fff;
}
.cc-logo {
  margin-right: 6px;
}
.title {
  font-size: 20px;
}
.caption {
  display: flex;
  align-items: center;
  gap: 54px;
  margin-left: auto;
  margin-right: 27px;
}
.menubar {
  display: flex;
  align-items: center;
  flex: 0 0 28px;
  box-sizing: border-box;
  padding-left: 3px;
  border-bottom: 1px solid #a6a6a6;
  position: relative;
}
.cc-small {
  margin: -8px 7px 0 0;
}
.menubar span {
  margin-right: 11.3px;
  line-height: 26px;
}
.menubar .off {
  color: #8f8f8f;
}
.mdi {
  display: flex;
  gap: 2px;
  margin-left: auto;
  margin-right: 3px;
}
.mdi button {
  display: flex;
  align-items: center;
  justify-content: center;
  width: 23px;
  height: 23px;
  padding: 0;
  border: 0;
  border-right: 1px solid #bbb;
  border-bottom: 1px solid #999;
  background: #efefef;
}
.toolbar {
  display: flex;
  align-items: center;
  flex: 0 0 47px;
  box-sizing: border-box;
  padding-left: 7px;
  border-top: 1px solid #fff;
  border-bottom: 1px solid #a6a6a6;
}
.handle {
  flex: none;
  width: 4px;
  height: 38px;
  margin-right: 7px;
  border-left: 1px solid #a9a9a9;
  border-right: 1px solid #a9a9a9;
  background: #fff;
}
.handle-2 {
  margin-left: 4px;
  margin-right: 8px;
}
.tool {
  display: flex;
  align-items: center;
  justify-content: center;
  flex: none;
  width: 42.7px;
  height: 42px;
}
.sep {
  flex: none;
  width: 1px;
  height: 38px;
  background: #a9a9a9;
}
.sep-a {
  margin: 0 4px;
}
.sep-b {
  margin: 0 5px 0 4px;
}
.sep-c {
  margin: 0 6px 0 5px;
}
.break {
  flex: none;
  width: 1px;
  height: 45px;
  margin-left: 3px;
  background: #fff;
  box-shadow: -1px 0 0 #b5b5b5;
}
.body {
  display: flex;
  flex: 0 0 1009px;
}
.side {
  box-sizing: border-box;
  display: flex;
  flex-direction: column;
  align-items: center;
  flex: 0 0 48px;
  border-right: 1px solid #a9a9a9;
  border-bottom: 1px solid #a9a9a9;
}
.grip {
  display: block;
  flex: none;
  width: 36px;
  height: 3px;
  margin: 7px auto 0;
  border-top: 1px solid #a9a9a9;
  border-bottom: 1px solid #a9a9a9;
  background: #fff;
}
.side .grip {
  margin-bottom: 89px;
}
.side-item {
  display: flex;
  align-items: center;
  justify-content: center;
  flex: none;
  width: 42px;
  height: 42px;
}
.one {
  font: bold 12px "Liberation Serif", serif;
  color: #000;
}
.auto {
  box-sizing: border-box;
  border: 1px solid #a9a9a9;
  border-right-color: #ddd;
  border-bottom-color: #ddd;
  background: #fbfbfb;
}
.auto-txt {
  font: bold 11px "Liberation Sans", sans-serif;
  fill: #f00;
  text-anchor: middle;
}
.cube {
  fill: none;
  stroke: #444;
  stroke-width: 1;
}
.cube-txt {
  font: bold 9.5px "Liberation Sans", sans-serif;
  fill: #111;
  text-anchor: middle;
}
.center {
  display: flex;
  flex-direction: column;
  flex: 0 0 1836px;
}
.upper {
  display: flex;
  flex: 0 0 867px;
}
.docks {
  flex: 0 0 419px;
}
.dock-head {
  display: flex;
  align-items: center;
  justify-content: space-between;
  box-sizing: border-box;
  padding: 0 5px 0 3px;
  width: 412px;
}
.tree-head {
  height: 41px;
  padding-bottom: 11px;
}
.props-head {
  height: 63px;
  padding-top: 10px;
}
.tree {
  position: relative;
  box-sizing: border-box;
  width: 387px;
  height: 460px;
  margin-left: 13px;
  padding-top: 2px;
  background: #fff;
  border: 1px solid #ddd;
  border-top: 2px solid #777;
  border-left: 2px solid #777;
}
.tree-row {
  display: flex;
  align-items: center;
  height: 26px;
}
.arrow-down {
  width: 0;
  height: 0;
  margin: 0 12px 0 10px;
  border: 6px solid transparent;
  border-top: 8px solid #6d5450;
  border-bottom: 0;
}
.arrow-right {
  width: 0;
  height: 0;
  margin: 0 15px 0 41px;
  border: 6px solid transparent;
  border-left: 8px solid #6d5450;
  border-right: 0;
}
.check {
  display: flex;
  align-items: center;
  justify-content: center;
  box-sizing: border-box;
  width: 18px;
  height: 18px;
  border: 1.5px solid #000;
  background: #fff;
}
.folder {
  margin: 0 8px 0 7px;
}
.cloud {
  margin: 0 6px;
}
.smudge {
  position: absolute;
  left: 152px;
  top: -11px;
  width: 226px;
}
.smudge-top {
  height: 17px;
  background: #ececec;
  border-radius: 14px 18px 0 0;
}
.smudge-cells {
  display: flex;
  height: 18px;
}
.smudge-cells i {
  flex: 1;
}
.smudge-tail {
  width: 56px;
  height: 13px;
  margin-left: 4px;
  background: #ececec;
}
.props {
  box-sizing: border-box;
  width: 387px;
  height: 288px;
  margin-left: 13px;
  background: #efefef;
  border: 1px solid #fafafa;
  border-top: 2px solid #777;
  border-left: 2px solid #777;
}
.view {
  flex: 0 0 1417px;
  height: 867px;
  background: linear-gradient(#0a6496, #000);
}
.view svg {
  display: block;
}
.scale-num {
  font: 20px "Liberation Sans", sans-serif;
  fill: #e8e8e8;
  text-anchor: middle;
}
.size-msg {
  font: 16.5px "Liberation Mono", monospace;
  fill: #eee;
}
.axis {
  font: 15px "Liberation Serif", serif;
}
.console {
  flex: 1;
}
.console-head {
  display: flex;
  align-items: center;
  height: 48px;
  padding: 0 9px 4px 3px;
  box-sizing: border-box;
  gap: 17px;
}
.console-head span {
  margin-right: auto;
}
.log {
  display: flex;
  box-sizing: border-box;
  width: 1809px;
  height: 82px;
  margin-left: 13px;
  background: #fff;
  border: 1px solid #eee;
  border-top: 2px solid #777;
  border-left: 2px solid #777;
}
.log-rows {
  flex: 1;
}
.log-row {
  height: 24px;
  line-height: 25px;
  padding-left: 3px;
  white-space: nowrap;
}
.alt {
  background: #e7e6e2;
}
.scroll {
  display: flex;
  flex-direction: column;
  flex: 0 0 25px;
  background: #efefef;
}
.sb-btn {
  display: flex;
  align-items: center;
  justify-content: center;
  flex: 0 0 25px;
  padding: 0;
  background: #efefef;
  border: 0;
  border-top: 1px solid #fff;
  border-left: 1px solid #fff;
  border-right: 1px solid #888;
  border-bottom: 2px solid #888;
}
.up {
  border: 6.5px solid transparent;
  border-bottom: 7px solid #000;
  border-top: 0;
}
.down {
  border: 6.5px solid transparent;
  border-top: 7px solid #000;
  border-bottom: 0;
}
.sb-track {
  flex: 0 0 13px;
  background: #f4f4f4;
}
.sb-thumb {
  flex: 1;
  background: #efefef;
  border-top: 1px solid #fff;
  border-bottom: 1px solid #888;
}
.side-right {
  display: flex;
  flex-direction: column;
  align-items: center;
  flex: 1;
  border-left: 1px solid #fff;
  border-bottom: 1px solid #a9a9a9;
}
.side-right .grip {
  width: 40px;
}
.side-right svg {
  margin-top: 13px;
}
.side-right hr {
  align-self: stretch;
  height: 1px;
  margin: 6px 0 0;
  border: 0;
  background: #a9a9a9;
}
.status {
  display: flex;
  align-items: flex-end;
  justify-content: flex-end;
  flex: 1;
}
.tiny {
  font: 8px "Liberation Sans", sans-serif;
  fill: #8a8a8a;
}
.cc-txt {
  font: bold 11px "DejaVu Sans", sans-serif;
}
.sor {
  font: bold 16px "Liberation Sans", sans-serif;
  fill: #999;
}
.sf {
  font: bold 17px "Liberation Serif", serif;
  fill: #000;
  text-anchor: middle;
}
</style>
